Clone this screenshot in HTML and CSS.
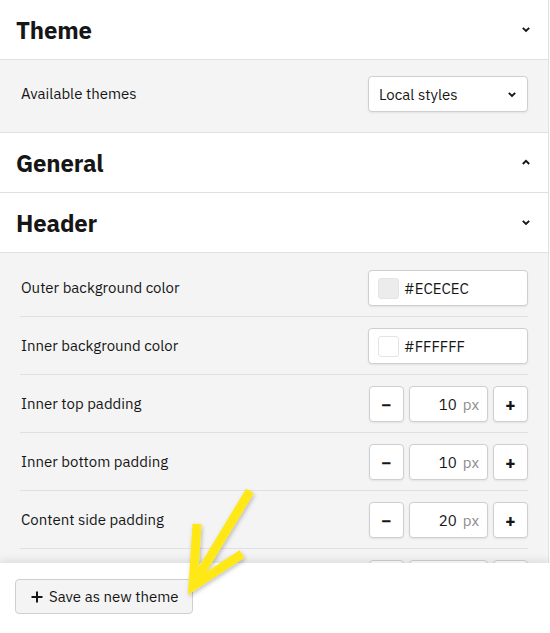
FILE: index.html
```html
<!DOCTYPE html>
<html>
<head>
<meta charset="utf-8">
<link rel="stylesheet" href="styles.css">
</head>
<body>
<div class="app">
  <div class="scroll">
    <div class="panel">
      <div class="sec-head">
        <h2>Theme</h2>
        <svg class="chev" width="10" height="7" viewBox="0 0 10 7"><path d="M1.8 1.8 L5 5 L8.2 1.8" fill="none" stroke="#161616" stroke-width="1.9"/></svg>
      </div>
      <div class="sec-body theme-body">
        <span class="label">Available themes</span>
        <div class="select">
          <span>Local styles</span>
          <svg width="10" height="7" viewBox="0 0 10 7"><path d="M1.8 1.8 L5 5 L8.2 1.8" fill="none" stroke="#161616" stroke-width="1.9"/></svg>
        </div>
      </div>
      <div class="sec-head">
        <h2>General</h2>
        <svg class="chev" width="10" height="7" viewBox="0 0 10 7"><path d="M1.8 5 L5 1.8 L8.2 5" fill="none" stroke="#161616" stroke-width="1.9"/></svg>
      </div>
      <div class="sec-head">
        <h2>Header</h2>
        <svg class="chev" width="10" height="7" viewBox="0 0 10 7"><path d="M1.8 1.8 L5 5 L8.2 1.8" fill="none" stroke="#161616" stroke-width="1.9"/></svg>
      </div>
      <div class="sec-body rows">
        <div class="row">
          <span class="label">Outer background color</span>
          <div class="color-input"><span class="swatch swatch-ec"></span><span>#ECECEC</span></div>
        </div>
        <div class="row">
          <span class="label">Inner background color</span>
          <div class="color-input"><span class="swatch swatch-ff"></span><span>#FFFFFF</span></div>
        </div>
        <div class="row">
          <span class="label">Inner top padding</span>
          <div class="stepper">
            <button class="step">&minus;</button>
            <div class="num"><span class="val">10</span><span class="unit">px</span></div>
            <button class="step">+</button>
          </div>
        </div>
        <div class="row">
          <span class="label">Inner bottom padding</span>
          <div class="stepper">
            <button class="step">&minus;</button>
            <div class="num"><span class="val">10</span><span class="unit">px</span></div>
            <button class="step">+</button>
          </div>
        </div>
        <div class="row">
          <span class="label">Content side padding</span>
          <div class="stepper">
            <button class="step">&minus;</button>
            <div class="num"><span class="val">20</span><span class="unit">px</span></div>
            <button class="step">+</button>
          </div>
        </div>
        <div class="row">
          <span class="label"></span>
          <div class="stepper">
            <div class="step"></div>
            <div class="num"></div>
            <div class="step"></div>
          </div>
        </div>
      </div>
    </div>
  </div>
  <div class="footer">
    <button class="save"><svg width="12" height="12" viewBox="0 0 12 12"><path d="M6 0.5 V11.5 M0.5 6 H11.5" stroke="#161616" stroke-width="2"/></svg>Save as new theme</button>
  </div>
  <svg class="arrow" width="550" height="633" viewBox="0 0 550 633">
    <defs>
      <filter id="sh" x="-20%" y="-20%" width="140%" height="140%">
        <feDropShadow dx="1" dy="2" stdDeviation="2" flood-color="#000" flood-opacity="0.25"/>
      </filter>
    </defs>
    <g filter="url(#sh)" fill="none" stroke="#FFE812" stroke-width="9" stroke-linecap="butt" stroke-linejoin="miter">
      <path d="M250 491 L195 582"/>
      <path d="M197 524 L193 586 L242 554"/>
    </g>
  </svg>
</div>
</body>
</html>
```
FILE: styles.css
```css
* { box-sizing: border-box; }
html, body { margin: 0; padding: 0; }
body {
  font-family: "IBM Plex Sans", Roboto, "Liberation Sans", sans-serif;
  color: #161616;
  background: #fff;
}
.app {
  position: relative;
  width: 550px;
  height: 633px;
  display: flex;
  flex-direction: column;
  overflow: hidden;
}
.scroll {
  flex: 1;
  overflow: hidden;
}
.panel {
  width: 549px;
  border-right: 1px solid #e0e0e0;
}
.sec-head {
  height: 60px;
  border-bottom: 1px solid #e0e0e0;
  background: #fff;
  display: flex;
  align-items: center;
  justify-content: space-between;
  padding: 0 17px 0 16px;
}
.sec-head h2 {
  margin: 0;
  font-size: 24px;
  font-weight: 700;
  letter-spacing: -0.2px;
}
.sec-body {
  background: #f4f4f4;
  border-bottom: 1px solid #e0e0e0;
  padding: 0 20px;
}
.theme-body {
  display: flex;
  align-items: center;
  justify-content: space-between;
  padding-top: 16px;
  padding-bottom: 20px;
}
.label {
  font-size: 15px;
  padding-left: 1px;
  margin-top: -1px;
}
.select {
  width: 160px;
  height: 36px;
  background: #fff;
  border: 1px solid #cfcfcf;
  border-radius: 4px;
  box-shadow: 0 1px 2px rgba(0,0,0,0.08);
  display: flex;
  align-items: center;
  justify-content: space-between;
  padding: 0 10px 0 10px;
  font-size: 15px;
}
.rows {
  padding-top: 6px;
}
.row {
  display: flex;
  align-items: center;
  justify-content: space-between;
  padding: 11px 0 10px;
  border-bottom: 1px solid #e0e0e0;
}
.color-input {
  width: 160px;
  height: 36px;
  background: #fff;
  border: 1px solid #cfcfcf;
  border-radius: 4px;
  box-shadow: 0 1px 2px rgba(0,0,0,0.08);
  display: flex;
  align-items: center;
  gap: 5px;
  padding: 0 9px;
  font-size: 15px;
}
.swatch {
  width: 21px;
  height: 21px;
  border-radius: 3px;
  border: 1px solid #e4e4e4;
}
.swatch-ec { background: #ececec; }
.swatch-ff { background: #ffffff; }
.stepper {
  display: flex;
  gap: 5px;
  height: 36px;
}
.step {
  width: 35px;
  height: 36px;
  background: #fff;
  border: 1px solid #cfcfcf;
  border-radius: 4px;
  box-shadow: 0 1px 2px rgba(0,0,0,0.08);
  font-family: inherit;
  font-size: 18px;
  font-weight: 700;
  color: #161616;
  padding: 0;
  display: flex;
  align-items: center;
  justify-content: center;
}
.num {
  width: 79px;
  height: 36px;
  background: #fff;
  border: 1px solid #cfcfcf;
  border-radius: 4px;
  box-shadow: 0 1px 2px rgba(0,0,0,0.08);
  display: flex;
  align-items: center;
  justify-content: flex-end;
  padding-right: 8px;
  gap: 6px;
}
.val { font-size: 15px; }
.unit { font-size: 15px; color: #8d8d8d; }
.footer {
  height: 70px;
  flex: none;
  background: #fff;
  box-shadow: 0 -3px 8px rgba(0,0,0,0.09);
  padding: 16px 15px;
  position: relative;
}
.save {
  height: 35px;
  width: 178px;
  background: #f4f4f4;
  border: 1px solid #cfcfcf;
  border-radius: 4px;
  font-family: inherit;
  font-size: 15px;
  color: #161616;
  display: flex;
  align-items: center;
  gap: 6px;
  padding: 0 0 0 15px;
}
.arrow {
  position: absolute;
  left: 0;
  top: 0;
  pointer-events: none;
}
```
